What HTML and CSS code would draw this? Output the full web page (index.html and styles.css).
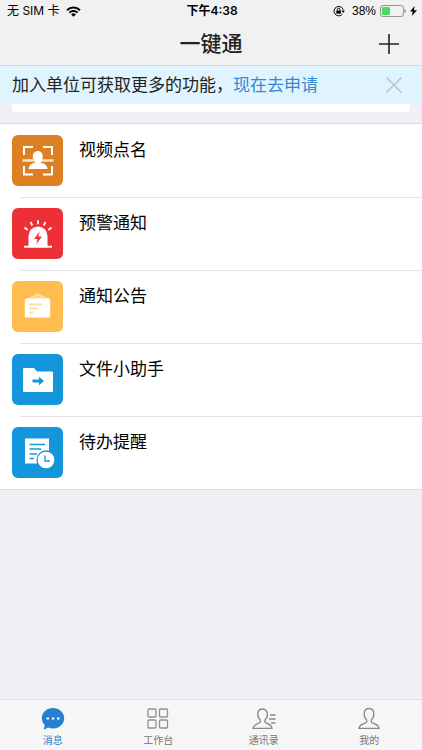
FILE: index.html
```html
<!DOCTYPE html>
<html lang="zh-CN">
<head>
<meta charset="utf-8">
<meta name="viewport" content="width=device-width, initial-scale=1">
<title>一键通</title>
<link rel="stylesheet" href="styles.css">
</head>
<body>
<header class="header">
  <div class="status">
    <div class="status-left">
      <span>无 SIM 卡</span>
      <svg width="15" height="11" viewBox="0 0 15 11" fill="none" stroke="#000" stroke-width="2"><path d="M1 4.2a9.2 9.2 0 0 1 13 0M3.4 6.6a5.8 5.8 0 0 1 8.2 0"/><path d="M7.5 10.8 5.1 8.4a3.4 3.4 0 0 1 4.8 0z" fill="#000" stroke="none"/></svg>
    </div>
    <time class="clock">下午4:38</time>
    <div class="status-right">
      <svg class="lock" width="12" height="12" viewBox="0 0 12 12" fill="none" stroke="#000"><path d="M9.300 9.200a4.700 4.700 0 1 1 .9-4.500"/><path d="M8.400 5.400h3.500l-1.700 2.500z" fill="#000" stroke="none"/><path d="M3.300 5.500h4.600v3.200H3.300z" fill="#000" stroke="none"/><path d="M4.400 5.500V4.400a1.200 1.200 0 0 1 2.400 0v1.100"/></svg>
      <span>38%</span>
      <svg width="26" height="12" viewBox="0 0 26 12"><rect x=".5" y=".5" width="23" height="11" rx="2.5" fill="none" stroke="#949494"/><rect x="2" y="2" width="8" height="8" rx="1" fill="#4cd964"/><path d="M24.5 4v4q1.5-.5 1.5-2t-1.500-2" fill="#949494"/></svg>
      <svg width="7" height="10" viewBox="0 0 7 10"><path d="M4.600 0 0 5.500h2.800L1.800 10 7 4.200H4z"/></svg>
    </div>
  </div>
  <div class="titlebar">
    <h1>一键通</h1>
    <button class="add" type="button" aria-label="添加"><svg width="20" height="20" viewBox="0 0 20 20" stroke="#222" stroke-width="1.6"><path d="M10 0v20M0 10h20"/></svg></button>
  </div>
</header>
<aside class="banner">
  <p>加入单位可获取更多的功能，<a href="#apply">现在去申请</a></p>
  <button class="close" type="button" aria-label="关闭"><svg width="16" height="16" viewBox="0 0 16 16" stroke="#b5bdc1" stroke-width="1.300"><path d="m.5.5 15 15M15.500.5l-15 15"/></svg></button>
</aside>
<main class="content">
  <div class="search-edge"></div>
  <ul class="list">
    <li><a class="row" href="#video">
      <svg class="icon orange" viewBox="0 0 51 51" fill="none" stroke="#fff" stroke-width="2"><path d="M12 20v-8h9M31 12h9v8M12 31v8.500h9M31 39.500h9V31"/><path d="M10.500 25.500h31" stroke="#f8e2ca" stroke-width="2.500"/><path d="M25.800 16c3 0 5 2.300 5 5.500 0 2-.8 3.700-2 4.700v1.600c3.200.7 6.200 1.700 6.700 6.200h-19c.5-4.500 3.500-5.500 6.500-6.200v-1.600c-1.200-1-2.200-2.700-2.200-4.700 0-3.200 2-5.500 5-5.500z" fill="#fff" stroke="none"/></svg>
      <span>视频点名</span></a></li>
    <li><a class="row" href="#alert">
      <svg class="icon red" viewBox="0 0 51 51" fill="none" stroke="#fff" stroke-width="1.800"><path d="M12 38.700h28" stroke-width="2"/><path d="M16.500 38V28a9.500 9.500 0 0 1 19 0v10z" fill="#fff" stroke="none"/><path d="m12.500 19.500 3.200 2.500M18.500 14l1.800 3.500M26 12.300v4M33.500 14l-1.800 3.500M39.500 19.500 36.300 22"/><path d="M27.500 23.500 22.200 31h3.300l-1.200 5.500 5.500-8h-3.400z" fill="#ec3035" stroke="none"/></svg>
      <span>预警通知</span></a></li>
    <li><a class="row" href="#notice">
      <svg class="icon yellow" viewBox="0 0 51 51" fill="none"><path d="m15 18 8.500-4.500q2.500-1.500 5 0L37 18z" fill="#ffe0ad"/><path d="m19 18 3.500-2M33 18l-3.500-2M24 17l2-2 2 2" stroke="#ffbd51" stroke-width="1"/><rect x="12.800" y="17.500" width="25.400" height="19" rx="1.500" fill="#fff"/><path d="M17.500 22.500H30v2H17.500zM17.500 26.500h8v2h-8zM17.500 30.500H21v2h-3.500z" fill="#ffdca3"/></svg>
      <span>通知公告</span></a></li>
    <li><a class="row" href="#files">
      <svg class="icon blue" viewBox="0 0 51 51"><path d="M11 15q0-1 1-1h10l3 3.500h15q1 0 1 1V37q0 1-1 1H12q-1 0-1-1z" fill="#fff"/><path d="M20.500 25.500h6.500v-2.800l5 4.300-5 4.300v-2.800h-6.500z" fill="#1596db"/></svg>
      <span>文件小助手</span></a></li>
    <li><a class="row" href="#todo">
      <svg class="icon blue" viewBox="0 0 51 51" fill="none"><path d="M13 11.500h24v25H13z" fill="#fff"/><path d="M17.500 17.500H33M17.500 22H29M17.500 27H25M17.500 31.500H22" stroke="#1596db" stroke-width="1.500"/><circle cx="34" cy="33" r="9" fill="#fff" stroke="#1596db" stroke-width="1.300"/><path d="M33 28.500V34h5" stroke="#1596db" stroke-width="1.300"/></svg>
      <span>待办提醒</span></a></li>
  </ul>
</main>
<nav class="tabs">
  <a class="tab active" href="#messages"><svg width="24" height="24" viewBox="0 0 24 24"><path d="M12 1c6.300 0 11.200 4.600 11.200 10.300S18.300 21.500 12 21.500c-1.800 0-3.500-.3-5-.9L2.800 22.800l.9-4.500A9.700 9.700 0 0 1 .8 11.300C.8 5.600 5.700 1 12 1z" fill="#2581cf"/><path d="M5.500 10.500H8v2H5.500zM10.800 10.500h2.500v2h-2.500zM16 10.500h2.500v2H16z" fill="#fff"/></svg><span>消息</span></a>
  <a class="tab" href="#workbench"><svg width="24" height="24" viewBox="0 0 24 24" fill="none" stroke="#929292" stroke-width="1.300"><rect x="2" y="2" width="8" height="8" rx="1"/><rect x="13.500" y="2" width="8" height="8" rx="1"/><rect x="2" y="13" width="8" height="8" rx="1"/><rect x="13.500" y="13" width="8" height="8" rx="1"/></svg><span>工作台</span></a>
  <a class="tab" href="#contacts"><svg width="24" height="24" viewBox="0 0 24 24" fill="none" stroke="#898989" stroke-width="1.300"><path d="M10.500 2C7.500 2 5.800 4.300 5.800 7.300c0 2.500 1 4.600 2.500 5.700v2C6.500 17 1.300 17 1 21.400h19C19.700 17 14.700 17 12.900 15v-2c1.500-1.100 2.500-3.200 2.500-5.700C15.400 4.300 13.500 2 10.500 2z"/><path d="M18 8h5.500M17 12h6.500M19 16h4.500"/></svg><span>通讯录</span></a>
  <a class="tab" href="#me"><svg width="24" height="24" viewBox="0 0 24 24" fill="none" stroke="#898989" stroke-width="1.300"><path d="M12 1.500C9 1.500 7.200 3.800 7.200 6.900c0 2.600 1 4.800 2.500 6v2C8 17 2.300 17 2 21.400h20C21.700 17 16 17 14.300 14.900v-2c1.500-1.200 2.500-3.400 2.500-6C16.800 3.800 15 1.500 12 1.500z"/></svg><span>我的</span></a>
</nav>
</body>
</html>
```

FILE: styles.css
```css
* { box-sizing: border-box; }
body {
  margin: 0;
  min-height: 100vh;
  display: flex;
  flex-direction: column;
  background: #efeff4;
  color: #000;
  font-family: Inter, "Noto Sans CJK SC", sans-serif;
}
a { color: inherit; text-decoration: none; }
button { padding: 0; border: 0; background: none; }
svg { display: block; flex: none; }
.header { background: #f1f1f1; border-bottom: 1px solid #d2d8dc; }
.status {
  display: grid;
  grid-template-columns: 1fr auto 1fr;
  align-items: center;
  height: 22px;
  padding: 0 5px 0 7px;
  font-size: 12px;
  line-height: 22px;
}
.status-left { display: flex; align-items: center; gap: 6px; }
.status-right { display: flex; align-items: center; justify-content: flex-end; gap: 4px; }
.status-right span { font-family: "Liberation Sans", sans-serif; }
.lock { margin-right: 3px; }
.clock { font-weight: 600; }
.titlebar {
  display: grid;
  grid-template-columns: 1fr auto 1fr;
  align-items: center;
  height: 43px;
  padding: 0 23px;
}
.titlebar h1 {
  grid-column: 2;
  margin: 0;
  color: #222;
  font-size: 21px;
  font-weight: 500;
  line-height: 32px;
}
.add { justify-self: end; }
.banner {
  display: flex;
  align-items: center;
  justify-content: space-between;
  height: 38px;
  padding: 0 20px 0 12px;
  background: #dff4fe;
  color: #222;
  font-size: 17px;
  line-height: 24px;
}
.banner p { margin: 0; }
.banner a { color: #3489d5; }
.content { flex: 1; }
.search-edge {
  height: 8px;
  margin: 0 12px 11px;
  border-radius: 0 0 4px 4px;
  background: #fff;
}
.list {
  display: grid;
  grid-auto-rows: 1fr;
  min-height: 367px;
  margin: 0;
  padding: 0;
  list-style: none;
  background: #fff;
  border-top: 1px solid #dcdce0;
  border-bottom: 1px solid #dcdce0;
}
.row {
  display: flex;
  gap: 16px;
  padding: 11px 12px 0;
  font-size: 17px;
  line-height: 30px;
}
.list li + li::before {
  content: "";
  display: block;
  height: 1px;
  margin: 0 0 -1px 20px;
  background: #e2e2e5;
}
.icon { width: 51px; height: 51px; border-radius: 6px; }
.orange { background: #dd8024; }
.red { background: #ec3035; }
.yellow { background: #ffbd51; }
.blue { background: #1596db; }
.tabs {
  display: grid;
  grid-template-columns: repeat(4, 1fr);
  height: 51px;
  background: #f6f6f6;
  border-top: 1px solid #dedee1;
}
.tab {
  display: flex;
  flex-direction: column;
  align-items: center;
  gap: 1px;
  padding-top: 7px;
  color: #777;
  font-size: 10px;
  line-height: 16px;
}
.active { color: #2581cf; }
```
